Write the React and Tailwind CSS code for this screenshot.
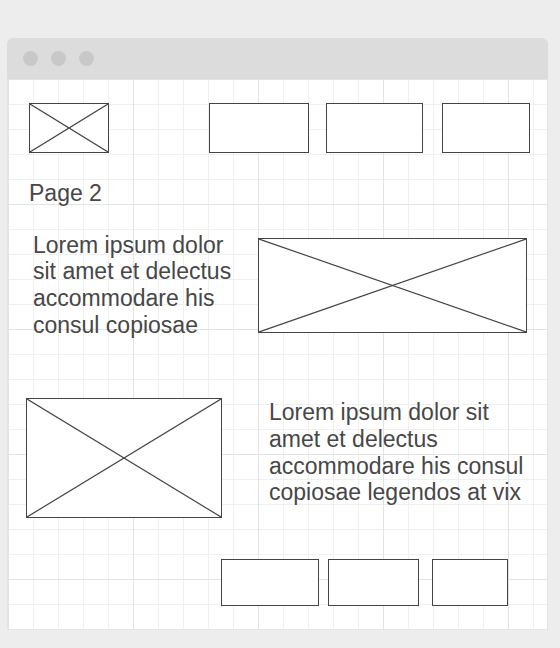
import React from 'react';

function Placeholder({ className }) {
  return (
    <div className={`border border-[#444] bg-white ${className}`}>
      <svg className="block h-full w-full" viewBox="0 0 100 100" preserveAspectRatio="none">
        <line x1="0" y1="0" x2="100" y2="100" stroke="#444" strokeWidth="1.2" vectorEffect="non-scaling-stroke" />
        <line x1="100" y1="0" x2="0" y2="100" stroke="#444" strokeWidth="1.2" vectorEffect="non-scaling-stroke" />
      </svg>
    </div>
  );
}

function Box({ className }) {
  return <div className={`border border-[#444] bg-white ${className}`} />;
}

export default function App() {
  return (
    <div className="min-h-[648px] bg-[#ededed] pt-[38px] pl-[7px] font-['Liberation_Sans',Arial,sans-serif] text-[#474747]">
      <div className="w-[541px]">
        {/* Title bar */}
        <div className="flex h-[41px] items-center gap-[13px] rounded-t-[6px] bg-[#dcdcdc] pl-[16px]">
          <span className="h-[15px] w-[15px] rounded-full bg-[#c8c8c8]" />
          <span className="h-[15px] w-[15px] rounded-full bg-[#c8c8c8]" />
          <span className="h-[15px] w-[15px] rounded-full bg-[#c8c8c8]" />
        </div>

        {/* Canvas */}
        <div className="h-[551px] border-x border-b border-[#e4e4e4] bg-white bg-[linear-gradient(to_right,#e3e3e3_1px,transparent_1px),linear-gradient(to_bottom,#e3e3e3_1px,transparent_1px),linear-gradient(to_right,#f0f0f0_1px,transparent_1px),linear-gradient(to_bottom,#f0f0f0_1px,transparent_1px)] bg-[size:125px_125px,125px_125px,25px_25px,25px_25px]">
          {/* Header */}
          <div className="flex items-start pt-[24px]">
            <Placeholder className="ml-[21px] h-[50px] w-[80px]" />
            <Box className="ml-[100px] h-[50px] w-[100px]" />
            <Box className="ml-[17px] h-[50px] w-[97px]" />
            <Box className="ml-[19px] h-[50px] w-[88px]" />
          </div>

          <p className="ml-[21px] mt-[27px] text-[23px] leading-[26.67px]">Page 2</p>

          {/* Section 1 */}
          <div className="mt-[25px] flex items-start">
            <p className="ml-[25px] w-[213px] text-[23px] leading-[26.67px]">
              Lorem ipsum dolor sit amet et delectus accommodare his consul copiosae
            </p>
            <Placeholder className="ml-[12px] mt-[6px] h-[95px] w-[269px]" />
          </div>

          {/* Section 2 */}
          <div className="mt-[60px] flex items-start">
            <Placeholder className="ml-[18px] h-[120px] w-[196px]" />
            <p className="ml-[47px] mt-[1px] w-[264px] text-[23px] leading-[26.67px]">
              Lorem ipsum dolor sit amet et delectus accommodare his consul copiosae legendos at vix
            </p>
          </div>

          {/* Footer buttons */}
          <div className="mt-[41px] flex items-start">
            <Box className="ml-[213px] h-[47px] w-[98px]" />
            <Box className="ml-[9px] h-[47px] w-[91px]" />
            <Box className="ml-[13px] h-[47px] w-[76px]" />
          </div>
        </div>
      </div>
    </div>
  );
}
